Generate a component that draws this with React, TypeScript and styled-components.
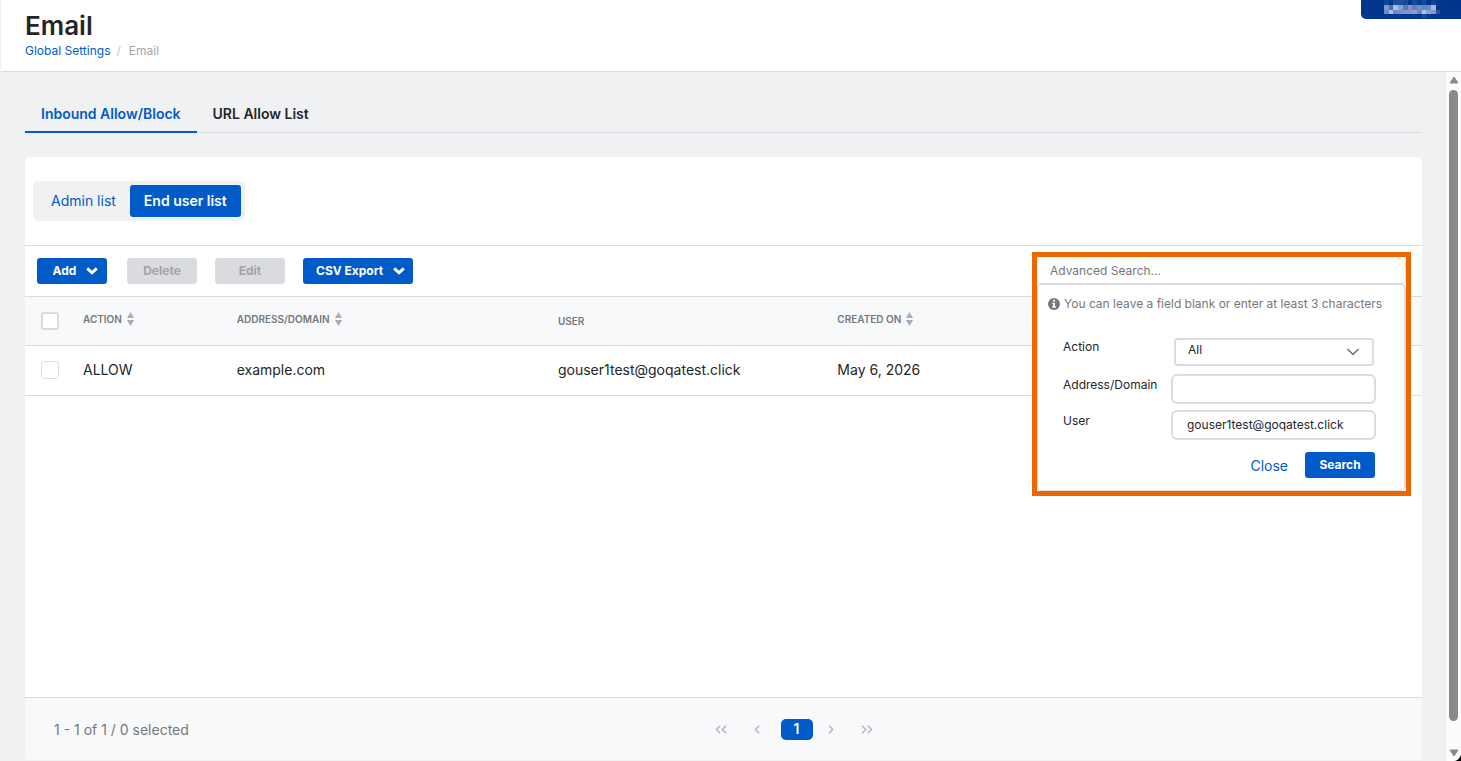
import React from "react";
import styled, { createGlobalStyle, css } from "styled-components";

const color = {
  blue: "#005bc8",
  navy: "#00368c",
  orange: "#ed6600",
  text: "#242629",
  muted: "#74787d",
  faint: "#a1a5ab",
  line: "#d9dbdf",
  field: "#dbdbe1",
  page: "#f0f1f3",
  soft: "#f8f9fb",
};

const GlobalStyle = createGlobalStyle`
  *, *::before, *::after { box-sizing: border-box; }
  body { margin: 0; background: #000; }
  #root { font-family: Inter, "Liberation Sans", sans-serif; font-size: 14px; line-height: 20px; color: ${color.text}; }
  button, input, select { font: inherit; color: inherit; }
  button { cursor: pointer; border: 0; background: none; padding: 0; }
  a { text-decoration: none; }
`;

const Page = styled.div`
  display: flex;
  flex-direction: column;
  height: 100vh;
  background: ${color.page};
  border-bottom-right-radius: 8px;
  overflow: hidden;
`;

const Header = styled.header`
  position: relative;
  flex: none;
  height: 72px;
  margin-left: 1px;
  padding: 10px 24px 0;
  background: #fff;
  border-bottom: 1px solid ${color.line};
`;

const Title = styled.h1`
  margin: 0;
  font-size: 26px;
  line-height: 32px;
  font-weight: 600;
`;

const Breadcrumb = styled.nav`
  display: flex;
  gap: 6px;
  font-size: 12px;
  line-height: 18px;
  color: ${color.faint};
  a { color: ${color.blue}; }
  i { font-style: normal; margin-right: 2px; color: #c6c8cc; }
`;

const AccountBadge = styled.div`
  position: absolute;
  top: 0;
  right: 0;
  width: 100px;
  height: 19px;
  background: ${color.navy};
  border-bottom-left-radius: 5px;
  svg { position: absolute; left: 23px; top: 0; }
`;

const Body = styled.div`
  display: flex;
  flex: 1;
  min-height: 0;
`;

const Main = styled.main`
  display: flex;
  flex-direction: column;
  flex: 1;
  min-width: 0;
  padding: 24px 24px 1px 25px;
`;

const Tabs = styled.nav`
  display: flex;
  flex: none;
  height: 37px;
  margin-bottom: 24px;
  border-bottom: 1px solid ${color.line};
`;

const Tab = styled.a<{ $active?: boolean }>`
  height: 37px;
  padding: 8px 16px 0;
  font-weight: 600;
  color: ${(p) => (p.$active ? color.blue : color.text)};
  border-bottom: 2px solid ${(p) => (p.$active ? color.blue : "transparent")};
`;

const Card = styled.section`
  display: flex;
  flex-direction: column;
  flex: 1;
  background: #fff;
  border-radius: 5px;
`;

const ListSwitch = styled.div`
  flex: none;
  height: 89px;
  padding: 24px 8px;
  border-bottom: 1px solid ${color.line};
`;

const Segments = styled.div`
  display: inline-flex;
  padding: 4px;
  background: ${color.page};
  border-radius: 5px;
`;

const Segment = styled.button<{ $active?: boolean }>`
  height: 32px;
  padding: 0 14px;
  border-radius: 3px;
  color: ${color.blue};
  ${(p) => p.$active && css`
    background: ${color.blue};
    color: #fff;
    font-weight: 600;
  `}
`;

const Toolbar = styled.div`
  position: relative;
  display: flex;
  flex: none;
  align-items: center;
  gap: 18px;
  height: 51px;
  padding: 0 12px;
  border-bottom: 1px solid ${color.line};
`;

const ActionButton = styled.button`
  display: flex;
  align-items: center;
  justify-content: center;
  gap: 10px;
  min-width: 70px;
  height: 26px;
  padding: 0 8px 0 13px;
  background: ${color.blue};
  border-radius: 3px;
  color: #fff;
  font-size: 12px;
  font-weight: 700;
  &:disabled { padding: 0; background: ${color.line}; color: ${color.faint}; }
`;

const AddButton = styled(ActionButton)`
  margin-right: 2px;
  padding-left: 15px;
`;

const Table = styled.table`
  width: 100%;
  table-layout: fixed;
  border-collapse: collapse;
  th, td { padding: 0; text-align: left; border-bottom: 1px solid ${color.line}; vertical-align: middle; }
  th { height: 48px; font-size: 10px; font-weight: 600; color: ${color.muted}; background: ${color.soft}; }
  td { height: 50px; }
`;

const Column = styled.col<{ $width?: string }>`
  width: ${(p) => p.$width ?? "auto"};
`;

const HeadCell = styled.span<{ $sortable?: boolean }>`
  display: flex;
  align-items: center;
  gap: 5px;
  padding-bottom: ${(p) => (p.$sortable ? "4px" : "0")};
`;

const Check = styled.input<{ $strong?: boolean }>`
  appearance: none;
  display: block;
  width: 18px;
  height: 18px;
  margin: 0 16px;
  background: #fff;
  border: ${(p) => (p.$strong ? 2 : 1)}px solid ${color.line};
  border-radius: 3px;
`;

const Footer = styled.footer`
  display: grid;
  grid-template-columns: calc(50% - 21px) auto;
  align-items: center;
  height: 63px;
  margin-top: auto;
  background: ${color.soft};
  border-top: 1px solid ${color.line};
  border-radius: 0 0 5px 5px;
`;

const Summary = styled.p`
  margin: 0;
  padding: 2px 0 0 29px;
  color: ${color.muted};
`;

const Pager = styled.nav`
  display: flex;
  align-items: center;
`;

const PageArrow = styled.button`
  display: flex;
  align-items: center;
  justify-content: center;
  width: 36px;
  height: 24px;
  color: ${color.faint};
`;

const PageNumber = styled.button`
  width: 32px;
  height: 21px;
  margin-left: 6px;
  background: ${color.blue};
  border-radius: 5px;
  color: #fff;
  font-weight: 600;
`;

const SearchBox = styled.section`
  position: absolute;
  z-index: 1;
  top: 6px;
  right: 11px;
  width: 379px;
  background: #fff;
  border: 5px solid ${color.orange};
`;

const SearchInput = styled.input`
  display: block;
  width: 100%;
  height: 27px;
  padding: 0 13px;
  border: 0 solid ${color.field};
  border-width: 0 1px 1px 0;
  border-radius: 0 4px 4px 4px;
  background: #fff;
  font-size: 12px;
  outline: 0;
  &::placeholder { color: ${color.muted}; opacity: 1; }
`;

const SearchForm = styled.form`
  height: 207px;
  padding: 10px 29px 0 10px;
  border: 1px solid ${color.field};
  border-right-width: 2px;
  border-radius: 5px;
  font-size: 12px;
`;

const Hint = styled.p`
  display: flex;
  align-items: center;
  gap: 4px;
  margin: 0 0 25px;
  color: ${color.muted};
  line-height: 18px;
  white-space: nowrap;
  svg { flex: none; }
`;

const Fields = styled.div`
  display: flex;
  flex-direction: column;
  gap: 6px;
  margin-right: -1px;
`;

const Field = styled.div<{ $select?: boolean }>`
  display: grid;
  grid-template-columns: 108px 1fr;
  padding-left: 15px;
  min-height: 30px;
  line-height: ${(p) => (p.$select ? 18 : 22)}px;
`;

const fieldBox = css`
  width: 100%;
  height: 30px;
  background: #fff;
  border: 2px solid ${color.field};
  border-radius: 6px;
  font-size: 12px;
  outline: 0;
`;

const TextField = styled.input`
  ${fieldBox}
  padding: 0 14px 1px;
`;

const SelectWrap = styled.div`
  position: relative;
  padding: 0 2px 0 3px;
  svg { position: absolute; right: 17px; top: 10px; pointer-events: none; }
`;

const SelectField = styled.select`
  ${fieldBox}
  appearance: none;
  height: 28px;
  padding: 0 30px 4px 12px;
  border-radius: 4px;
`;

const FormActions = styled.div`
  display: flex;
  justify-content: flex-end;
  align-items: center;
  gap: 17px;
  margin-top: 12px;
`;

const CloseButton = styled.button`
  padding-top: 2px;
  color: ${color.blue};
  font-size: 14px;
`;

const SubmitButton = styled(ActionButton)`
  padding: 0;
`;

const ScrollTrack = styled.div`
  display: flex;
  flex-direction: column;
  align-items: center;
  flex: none;
  width: 15px;
  padding: 4px 0;
  background: #fcfcfc;
`;

const ScrollThumb = styled.div`
  flex: 1;
  width: 9px;
  margin: 6px 0 28px;
  background: #8a8a8a;
  border-radius: 5px;
`;

const MenuChevron = () => (
  <svg width="12" height="8" viewBox="0 0 12 8" fill="none" stroke="#fff" strokeWidth="3" aria-hidden="true">
    <path d="M1.2 1.3 6 5.8l4.8-4.5" />
  </svg>
);

const SortIcon = () => (
  <svg width="7" height="14" viewBox="0 0 7 14" fill="#a9acb2" aria-hidden="true">
    <path d="M3.5 0 7 6H0zM3.5 14 0 8h7z" />
  </svg>
);

const Arrows = ({ double, flip }: { double?: boolean; flip?: boolean }) => (
  <svg width={double ? 12 : 6} height="9" viewBox={double ? "0 0 12 9" : "0 0 6 9"} fill="none" stroke="#b0b3b8" strokeWidth="1.4" aria-hidden="true">
    {flip ? (
      <path d={double ? "M1 .7 4.8 4.5 1 8.3M6.8.7l3.8 3.8-3.8 3.8" : "M1 .7 4.8 4.5 1 8.3"} />
    ) : (
      <path d={double ? "M5.2.7 1.4 4.5l3.8 3.8M11 .7 7.2 4.5 11 8.3" : "M5.2.7 1.4 4.5l3.8 3.8"} />
    )}
  </svg>
);

const InfoIcon = () => (
  <svg width="12" height="12" viewBox="0 0 12 12" aria-hidden="true">
    <circle cx="6" cy="6" r="6" fill={color.muted} />
    <path d="M5 1.8h2v1.8H5zM4.3 4.7H7v3.6h.8v1.4H4.2V8.3H5V6h-.7z" fill="#fff" />
  </svg>
);

const ScrollArrow = ({ down }: { down?: boolean }) => (
  <svg width="10" height="8" viewBox="0 0 10 8" fill="#8a8a8a" stroke="#8a8a8a" strokeWidth="1" strokeLinejoin="round" aria-hidden="true">
    <path d={down ? "M1 1h8L5 7z" : "M1 7h8L5 1z"} />
  </svg>
);

const mosaic = [
  ["#0f4596", "#00368c", "#1b4f9c", "#1b4f9c", "#184a9a", "#00368c", "#164a9b", "#083d91", "#164a9b", "#00368c", "#0f4596", "#00368c"],
  ["#7a96cb", "#4a6fb4", "#a9c0e2", "#86a3d2", "#5677b8", "#8d8fc0", "#5f80be", "#6f90c8", "#5f83c2", "#5f8dc8", "#b5b3d0", "#00368c"],
  ["#6d8bc4", "#a3c0e6", "#6d88c4", "#7790c8", "#8d8fc5", "#8099cc", "#8aa0d0", "#6a86c2", "#a9c4e6", "#86a3d2", "#7e9ace", "#2f4f9c"],
  ["#00368c", "#00368c", "#00368c", "#053a90", "#00368c", "#00368c", "#053a90", "#00368c", "#1b4f9c", "#083d91", "#00368c", "#00368c"],
];

const Mosaic = () => (
  <svg width="56" height="18" viewBox="0 0 56 18" shapeRendering="crispEdges" aria-hidden="true">
    {mosaic.map((row, r) =>
      row.map((fill, c) => (
        <rect key={`${r}-${c}`} x={c * 4.7} y={r === 0 ? 0 : r * 4.5 + 0.5} width="4.7" height={r === 0 ? 5 : 4.5} fill={fill} />
      ))
    )}
  </svg>
);

const columns = [
  { label: "ACTION", sortable: true },
  { label: "ADDRESS/DOMAIN", sortable: true },
  { label: "USER", sortable: false },
  { label: "CREATED ON", sortable: true },
];

const rows = [["ALLOW", "example.com", "gouser1test@goqatest.click", "May 6, 2026"]];

const AdvancedSearch = () => (
  <SearchBox aria-label="Advanced search">
    <SearchInput aria-label="Advanced Search" placeholder="Advanced Search..." />
    <SearchForm onSubmit={(e) => e.preventDefault()}>
      <Hint>
        <InfoIcon />
        You can leave a field blank or enter at least 3 characters
      </Hint>
      <Fields>
        <Field $select>
          <label htmlFor="action">Action</label>
          <SelectWrap>
            <SelectField id="action" defaultValue="All">
              <option>All</option>
              <option>Allow</option>
              <option>Block</option>
            </SelectField>
            <svg width="12" height="8" viewBox="0 0 12 8" fill="none" stroke="#6b6f75" strokeWidth="1.4" aria-hidden="true">
              <path d="M.5 1 6 6.5 11.5 1" />
            </svg>
          </SelectWrap>
        </Field>
        <Field>
          <label htmlFor="address">Address/Domain</label>
          <TextField id="address" />
        </Field>
        <Field>
          <label htmlFor="user">User</label>
          <TextField id="user" defaultValue="gouser1test@goqatest.click" />
        </Field>
      </Fields>
      <FormActions>
        <CloseButton type="button">Close</CloseButton>
        <SubmitButton type="submit">Search</SubmitButton>
      </FormActions>
    </SearchForm>
  </SearchBox>
);

export default function App() {
  return (
    <>
      <GlobalStyle />
      <Page>
        <Header>
          <Title>Email</Title>
          <Breadcrumb aria-label="Breadcrumb">
            <a href="#settings">Global Settings</a>
            <i>/</i>
            <span>Email</span>
          </Breadcrumb>
          <AccountBadge>
            <Mosaic />
          </AccountBadge>
        </Header>
        <Body>
          <Main>
            <Tabs>
              <Tab href="#inbound" $active>Inbound Allow/Block</Tab>
              <Tab href="#urls">URL Allow List</Tab>
            </Tabs>
            <Card>
              <ListSwitch>
                <Segments>
                  <Segment>Admin list</Segment>
                  <Segment $active>End user list</Segment>
                </Segments>
              </ListSwitch>
              <Toolbar>
                <AddButton>Add <MenuChevron /></AddButton>
                <ActionButton disabled>Delete</ActionButton>
                <ActionButton disabled>Edit</ActionButton>
                <ActionButton>CSV Export <MenuChevron /></ActionButton>
                <AdvancedSearch />
              </Toolbar>
              <Table>
                <colgroup>
                  <Column $width="58px" />
                  <Column $width="11%" />
                  <Column $width="23%" />
                  <Column $width="20%" />
                  <Column />
                </colgroup>
                <thead>
                  <tr>
                    <th><Check type="checkbox" aria-label="Select all" $strong /></th>
                    {columns.map((c) => (
                      <th key={c.label}>
                        <HeadCell $sortable={c.sortable}>
                          {c.label}
                          {c.sortable && <SortIcon />}
                        </HeadCell>
                      </th>
                    ))}
                  </tr>
                </thead>
                <tbody>
                  {rows.map((row) => (
                    <tr key={row[2]}>
                      <td><Check type="checkbox" aria-label="Select row" /></td>
                      {row.map((cell) => <td key={cell}>{cell}</td>)}
                    </tr>
                  ))}
                </tbody>
              </Table>
              <Footer>
                <Summary>1 - 1 of 1 / 0 selected</Summary>
                <Pager aria-label="Pages">
                  <PageArrow aria-label="First page"><Arrows double /></PageArrow>
                  <PageArrow aria-label="Previous page"><Arrows /></PageArrow>
                  <PageNumber>1</PageNumber>
                  <PageArrow aria-label="Next page"><Arrows flip /></PageArrow>
                  <PageArrow aria-label="Last page"><Arrows double flip /></PageArrow>
                </Pager>
              </Footer>
            </Card>
          </Main>
          <ScrollTrack aria-hidden="true">
            <ScrollArrow />
            <ScrollThumb />
            <ScrollArrow down />
          </ScrollTrack>
        </Body>
      </Page>
    </>
  );
}
